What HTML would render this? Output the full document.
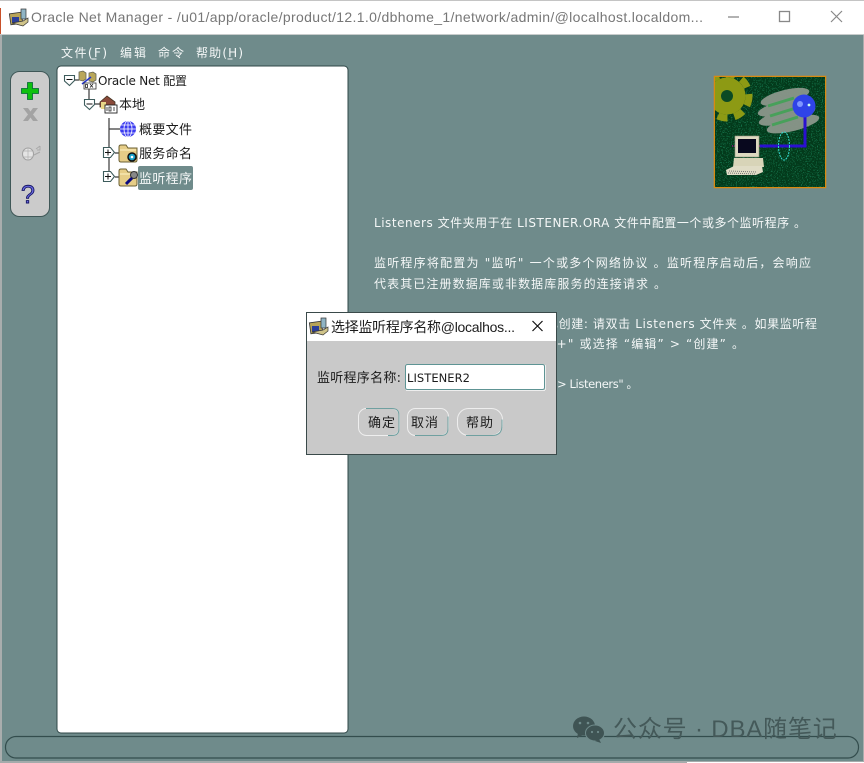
<!DOCTYPE html>
<html><head><meta charset="utf-8"><style>
html,body{margin:0;padding:0;width:864px;height:763px;overflow:hidden;background:#6f8b8b}
svg{display:block;position:absolute;left:0;top:0;filter:blur(.3px)}
text{font-family:"DejaVu Sans","WenQuanYi Zen Hei","Noto Sans CJK SC",sans-serif;font-size:12px}
.w{fill:#f4f7f7}.b{fill:#1c1c1c}
.t{font-family:"Liberation Sans","Noto Sans CJK SC",sans-serif;font-size:14px}
</style></head><body>
<svg width="864" height="763" viewBox="0 0 864 763" xmlns="http://www.w3.org/2000/svg">
<defs>
<clipPath id="lc"><rect x="715" y="77" width="110" height="110"/></clipPath>
<filter id="sp" x="0" y="0" width="100%" height="100%"><feTurbulence type="fractalNoise" baseFrequency="0.8" numOctaves="2" seed="4"/><feColorMatrix values="0 0 0 0 0.02  0 0 0 0 0.42  0 0 0 0 0.2  0 0 0 7 -3.8"/></filter>
<g id="ic"><rect x="1" y="5" width="12" height="11" fill="#b8a458" stroke="#333" stroke-width=".8" transform="rotate(-8 7 10)"/><rect x="3" y="9" width="7" height="6" fill="#2b3f9a"/><rect x="12" y="1" width="5" height="10" fill="#8fb4c4" stroke="#333" stroke-width=".7"/><path d="M3 15l11 3 5-4v-4l-5 3z" fill="#d0c48a" stroke="#333" stroke-width=".7"/></g>
<g id="folder"><path d="M1 4q0-2 2-2h5l2 3h9v12q0 2-2 2H3q-2 0-2-2z" fill="#e6cd87" stroke="#6b6034"/><path d="M2 7h16" stroke="#fff3c4"/></g>
</defs>

<rect width="864" height="763" fill="#6f8b8b"/>
<rect x="0" y="35" width="2" height="728" fill="#a9adad"/>
<rect x="863" y="35" width="1" height="728" fill="#a9adad"/>
<rect x="0" y="761" width="864" height="2" fill="#a4abab"/>
<rect x="687" y="762" width="177" height="1" fill="#fff"/>

<!-- title bar -->
<rect width="864" height="34" fill="#fff"/>
<rect width="864" height="1" fill="#c4c4c4"/>
<rect y="34" width="864" height="1" fill="#c8cccc"/>
<rect y="8" width="1" height="26" fill="#c8502a"/>
<use href="#ic" x="9" y="8"/>
<text x="31" y="22" textLength="672" lengthAdjust="spacing" class="t" fill="#777">Oracle Net Manager - /u01/app/oracle/product/12.1.0/dbhome_1/network/admin/@localhost.localdom...</text>
<path d="M728 17h11" stroke="#888" stroke-width="1.300"/>
<rect x="779.500" y="11.500" width="10" height="10" fill="none" stroke="#888" stroke-width="1.300"/>
<path d="M831 11l11 11M842 11l-11 11" stroke="#888" stroke-width="1.200"/>

<!-- menu -->
<text x="61" y="57" textLength="46" class="w">文件(F)</text>
<path d="M91.500 59h5" stroke="#f4f7f7"/>
<text x="120" y="57" textLength="26" class="w">编辑</text>
<text x="158" y="57" textLength="26" class="w">命令</text>
<text x="196" y="57" textLength="47" class="w">帮助(H)</text>
<path d="M227.500 59h5" stroke="#f4f7f7"/>

<!-- toolbar -->
<rect x="10.500" y="71.500" width="39" height="145" rx="9" fill="#cbcbcb" stroke="#3f5757" stroke-width="1"/>
<path d="M27.500 82.500h5v6h6v5h-6v6h-5v-6h-6v-5h6z" fill="#0fc00f" stroke="#063" stroke-width=".8"/>
<path d="M23 108l5 0 2.500 3.500 2.500-3.500h5l-5 6.500 5 6.500h-5l-2.500-3.500-2.500 3.500h-5l5-6.500z" fill="#a3a3a3"/>
<ellipse cx="28" cy="154" rx="5.500" ry="6" fill="#e4e4e4" stroke="#a0a0a0"/>
<path d="M24 151h8M24 157h8M28 148v12" stroke="#b0b0b0" stroke-width=".7"/>
<path d="M34 155l6-3M36 149l4-3M40 146v4h-3" stroke="#a8a8a8" fill="none"/>
<text x="21" y="203" style="font-family:'Liberation Sans',sans-serif;font-size:25px" fill="#6a6ae0" stroke="#141464" stroke-width=".9">?</text>

<!-- tree panel -->
<rect x="57" y="66" width="291" height="667" rx="4" fill="#fff" stroke="#2f4747" stroke-width="1"/>
<path d="M89 87v12M109 118v60" stroke="#3a3a3a" fill="none" stroke-width="1.200"/>
<path d="M75 80h4M95 104h5M109 129h11M115 153h4M115 177h4" stroke="#3a3a3a" stroke-width="1.200"/>
<g fill="#fff" stroke="#3d5c5c" stroke-width="1.100">
<path d="M64.500 75.500h10v5l-5 5-5-4.500z"/>
<path d="M84.500 99.500h10v5l-5 5-5-4.500z"/>
<path d="M103.500 147.500h7l4 5-4 5h-7z"/>
<path d="M103.500 171.500h7l4 5-4 5h-7z"/>
</g>
<path d="M66.500 79.500h6M86.500 104h6M105 152.500h6M108 149.500v6M105 176.500h6M108 173.500v6" stroke="#111" stroke-width="1"/>
<!-- Oracle Net icon -->
<path d="M79 72l4-1 3 2v6l-3 2-4-1z" fill="#b9a75a" stroke="#665" stroke-width=".8"/><path d="M89 73l4-1 3 2v6l-3 2-4-1z" fill="#b9a75a" stroke="#665" stroke-width=".8"/>
<path d="M82 84l9-7" stroke="#2233cc" stroke-width="1.500"/>
<rect x="84" y="83" width="12" height="6" fill="#fff" stroke="#333" stroke-width=".8"/><path d="M85.500 84.500h2v3h-2zM90 84l3 3.500M93 84l-3 3.500" stroke="#222" fill="none" stroke-width=".8"/>
<!-- local icon -->
<path d="M100 102l7-6 8 6v5h-15z" fill="#8a4a3a" stroke="#432" stroke-width=".8"/><rect x="101" y="102" width="5" height="7" fill="#e8d788"/>
<rect x="105" y="105" width="12" height="8" fill="#fff" stroke="#222" stroke-width=".9"/><path d="M107 107v4M109 107h2v4h-2zM114 107v4" stroke="#222" stroke-width=".8" fill="none"/>
<!-- globe -->
<circle cx="128" cy="129" r="8" fill="#3a3af0"/><path d="M120 129h16M121 125h14M121 133h14M128 121v16" stroke="#fff" stroke-width=".8"/><ellipse cx="128" cy="129" rx="4" ry="8" fill="none" stroke="#fff" stroke-width=".8"/>
<use href="#folder" x="118" y="143"/>
<circle cx="132" cy="157" r="4" fill="#18a0c8" stroke="#111" stroke-width="1.500"/><circle cx="132" cy="157" r="1.300" fill="#fff"/>
<use href="#folder" x="118" y="167"/>
<circle cx="134" cy="175" r="3.500" fill="#888" stroke="#333"/><path d="M132 178l-6 6" stroke="#0a0a80" stroke-width="3"/>
<text x="98" y="85" textLength="89" class="b">Oracle Net 配置</text>
<text x="119" y="109" textLength="26" class="b" style="font-size:13px">本地</text>
<text x="139" y="134" textLength="53" class="b" style="font-size:13px">概要文件</text>
<text x="139" y="158" textLength="53" class="b" style="font-size:13px">服务命名</text>
<rect x="138" y="166" width="55" height="24" rx="2" fill="#6f8b8b"/>
<text x="139" y="183" textLength="53" class="w" style="font-size:13px">监听程序</text>

<!-- logo image -->
<rect x="714.500" y="76.500" width="111" height="111" fill="#033d1c" stroke="#d98a10" stroke-width="1.500"/>
<g clip-path="url(#lc)">
<rect x="715" y="77" width="110" height="110" fill="#033a1b"/>
<rect x="715" y="77" width="110" height="110" filter="url(#sp)" opacity=".45"/>
<g stroke="#8d9a14" fill="none">
<circle cx="727" cy="96" r="12" stroke-width="13"/>
<circle cx="727" cy="96" r="22" stroke-width="7" stroke-dasharray="10 7"/>
</g>
<circle cx="727" cy="96" r="6" fill="#0b4a24"/>
<g fill="#8b978b" opacity=".95">
<ellipse cx="785" cy="97" rx="25" ry="7" transform="rotate(-14 785 97)"/>
<ellipse cx="785" cy="107" rx="28" ry="7" transform="rotate(-14 785 107)"/>
<ellipse cx="787" cy="116" rx="29" ry="7" transform="rotate(-14 787 116)"/>
<ellipse cx="793" cy="124" rx="27" ry="7" transform="rotate(-14 793 124)"/>
</g>
<path d="M768 106l26-8M770 116l26-8M772 125l26-8" stroke="#2fa648" stroke-width="3" opacity=".7"/>
<path d="M805 114v32h-45" fill="none" stroke="#2a10d0" stroke-width="3"/>
<path d="M760 146h-28" stroke="#70186a" stroke-width="2" stroke-dasharray="2 1"/>
<circle cx="804" cy="106" r="11.500" fill="#2f43e8"/><circle cx="800" cy="104" r="3" fill="#7f95ff"/><circle cx="809" cy="105" r="1.400" fill="#cfe"/>
<ellipse cx="784" cy="146" rx="5.500" ry="14" fill="none" stroke="#35dcd0" stroke-dasharray="2 1"/>
<rect x="735" y="136" width="24" height="21" fill="#ddd8c0" stroke="#999880" stroke-width=".6"/>
<rect x="738" y="139" width="18" height="14" fill="#08081e"/>
<path d="M734 158h29l1 9-31 0z" fill="#d8d4b8"/>
<path d="M726 170l8-4h28l1 6-7 3h-29z" fill="#e0dcc6"/>
<path d="M729 171l28 1M728 173l28 1" stroke="#777" stroke-dasharray="1 1"/>
</g>

<!-- right text -->
<text x="374" y="227" textLength="432" class="w">Listeners 文件夹用于在 LISTENER.ORA 文件中配置一个或多个监听程序 。</text>
<text x="374" y="267" textLength="437" class="w">监听程序将配置为 "监听" 一个或多个网络协议 。监听程序启动后，会响应</text>
<text x="374" y="288" textLength="292" class="w">代表其已注册数据库或非数据库服务的连接请求 。</text>
<text x="546" y="328" textLength="271" class="w">已创建: 请双击 Listeners 文件夹 。如果监听程</text>
<text x="550" y="348" textLength="194" class="w">"+" 或选择 “编辑” &gt; “创建” 。</text>
<text x="557" y="388" textLength="81" class="w" style="font-size:11.500px">&gt; Listeners" 。</text>

<!-- dialog -->
<rect x="306.500" y="312.500" width="250" height="142" fill="#c9c9c9" stroke="#3a4a4a"/>
<rect x="307" y="313" width="249" height="28" fill="#fff"/>
<use href="#ic" x="309" y="317"/>
<text x="331" y="332" textLength="184" class="t b">选择监听程序名称@localhos...</text>
<path d="M532.500 321l10 10M542.500 321l-10 10" stroke="#111" stroke-width="1.200"/>
<text x="317" y="382" textLength="84" class="b" style="font-size:13px">监听程序名称:</text>
<rect x="405.500" y="364.500" width="139" height="25" rx="2" fill="#fff" stroke="#5e9494" stroke-width="1"/>
<path d="M406 390.500h139M545.500 365v25" stroke="#eee"/>
<text x="407" y="382" textLength="63" class="b" style="font-size:11.500px">LISTENER2</text>
<rect x="358.500" y="408.500" width="41" height="27" rx="8" fill="#c9c9c9" stroke="#eee"/>
<path d="M366 408.500h26q7 0 7 7v13q0 7-7 7h-4" fill="none" stroke="#6fa0a0"/>
<text x="368" y="427" textLength="27" class="b" style="font-size:13px">确定</text>
<rect x="407.500" y="408.500" width="41" height="27" rx="8" fill="#c9c9c9" stroke="#eee"/>
<path d="M415 435.500h26q7 0 7-7v-12" fill="none" stroke="#6fa0a0"/>
<text x="411" y="427" textLength="27" class="b" style="font-size:13px">取消</text>
<rect x="457.500" y="408.500" width="45" height="27" rx="11" fill="#c9c9c9" stroke="#eee"/>
<path d="M466 435.500h26q10 0 10-10v-6" fill="none" stroke="#6fa0a0"/>
<text x="466" y="427" textLength="27" class="b" style="font-size:13px">帮助</text>

<!-- bottom bar -->
<rect x="5.500" y="736.500" width="853" height="21.500" rx="10.500" fill="none" stroke="#334d4d" stroke-width="1.200"/>

<!-- watermark -->
<g fill="#3f5454">
<ellipse cx="584" cy="726" rx="11" ry="9.500"/><path d="M578 733l-1 5 6-3z"/>
<ellipse cx="595" cy="733" rx="9.500" ry="8" stroke="#6f8b8b"/><path d="M599 739l2 4-6-2z"/>
</g>
<g fill="#6f8b8b"><circle cx="580" cy="723" r="1.300"/><circle cx="588" cy="723" r="1.300"/><circle cx="592" cy="732" r="1.100"/><circle cx="598" cy="732" r="1.100"/></g>
<text x="613" y="737" style="font-family:'Liberation Sans','Noto Sans CJK SC',sans-serif;font-size:24px;letter-spacing:.2px" textLength="224" fill="#445959">公众号 · DBA随笔记</text>
</svg>
</body></html>
